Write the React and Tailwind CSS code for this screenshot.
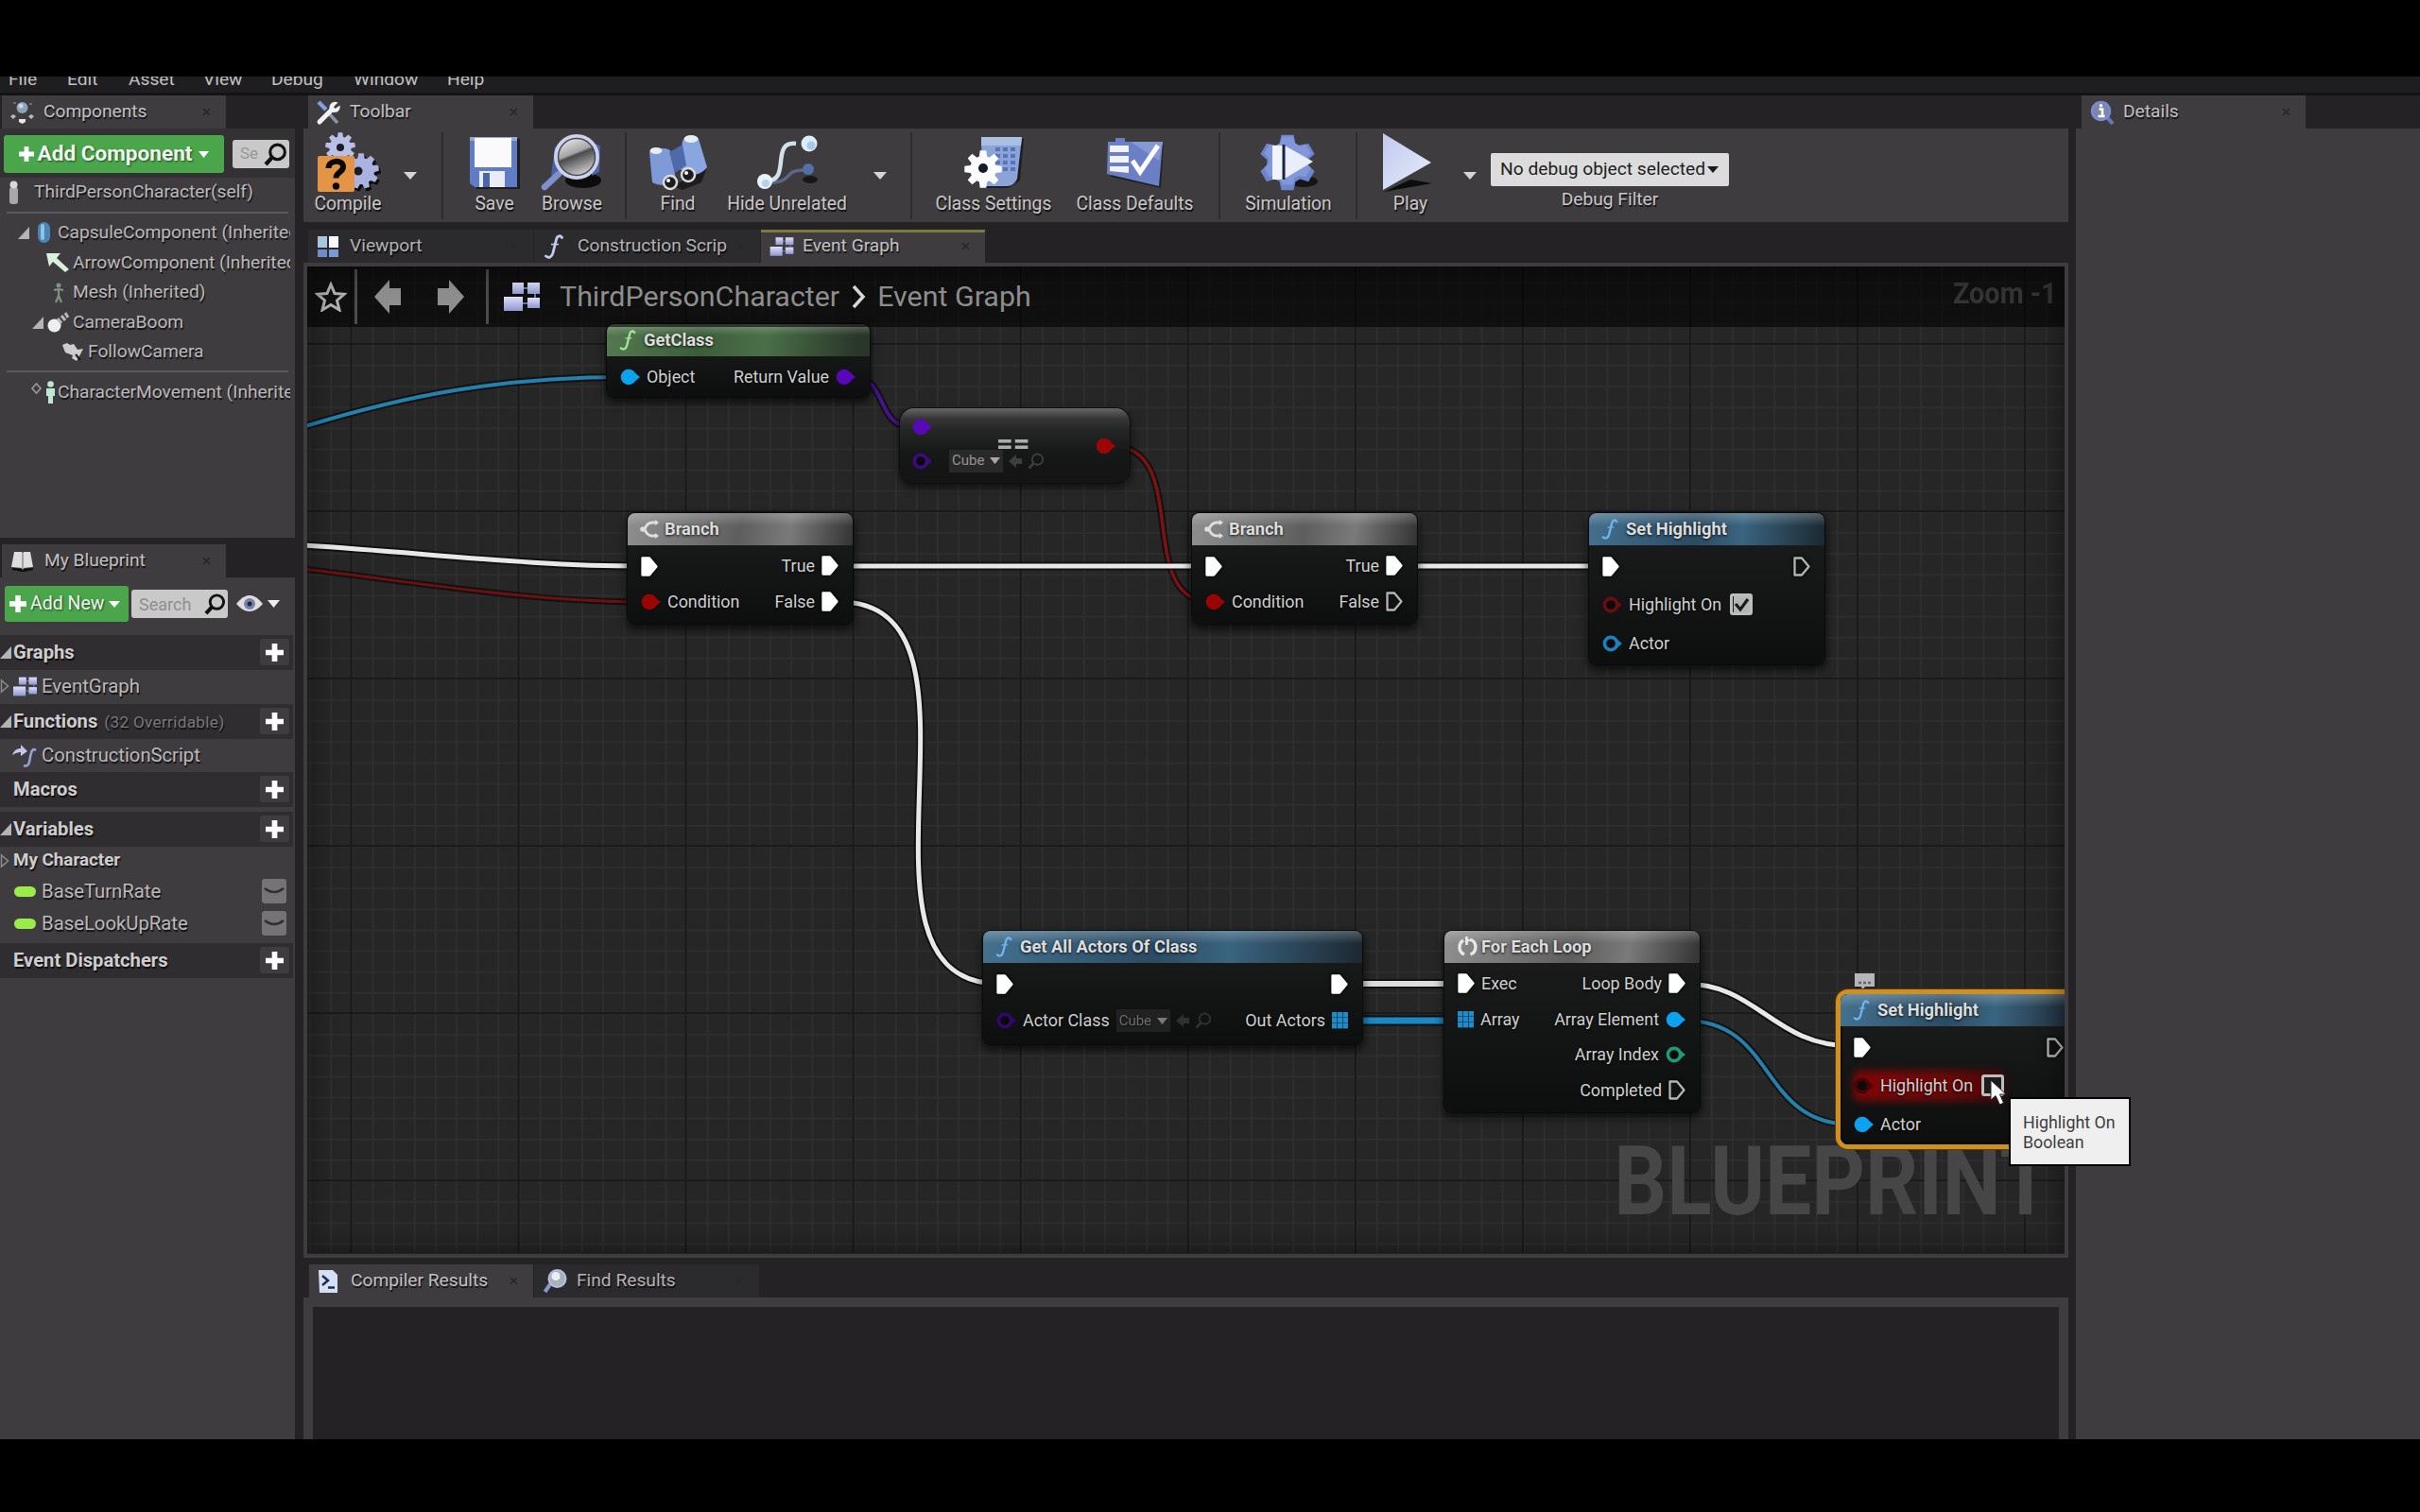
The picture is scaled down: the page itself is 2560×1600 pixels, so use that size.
import React from "react";

const GX = 325;
const GY = 282;

/* ---------- small icons ---------- */
function Svg({ w, h, children, className = "" }) {
  return (
    <svg width={w} height={h} viewBox={`0 0 ${w} ${h}`} className={`shrink-0 overflow-visible ${className}`}>
      {children}
    </svg>
  );
}

const Caret = ({ w = 14, h = 8, c = "#d4d4d4" }) => (
  <Svg w={w} h={h}>
    <path d={`M0 0H${w}L${w / 2} ${h}Z`} fill={c} />
  </Svg>
);

const Expanded = () => (
  <Svg w={12} h={13}>
    <path d="M12 0V13H0Z" fill="#b4b4b4" />
  </Svg>
);

const Collapsed = () => (
  <Svg w={10} h={14}>
    <path d="M1.500 1V13L8.500 7Z" fill="none" stroke="#8a8a8a" strokeWidth="1.500" />
  </Svg>
);

const Close = () => (
  <Svg w={9} h={9}>
    <path d="M1 1L8 8M8 1L1 8" stroke="#272628" strokeWidth="1.600" />
  </Svg>
);

const PlusBold = ({ s = 18, c = "#fff" }) => (
  <Svg w={s} h={s}>
    <path d={`M${s / 2} 0V${s}M0 ${s / 2}H${s}`} stroke={c} strokeWidth={s * 0.3} />
  </Svg>
);

const Search = ({ s = 24, c = "#111", sw = 3 }) => (
  <svg width={s} height={s} viewBox="0 0 24 24" className="shrink-0">
    <circle cx="14" cy="9.500" r="7.500" fill="none" stroke={c} strokeWidth={sw} />
    <path d="M8.500 15L2 22" stroke={c} strokeWidth={sw + 1.2} />
  </svg>
);

const GraphIcon = ({ w = 26, h = 24 }) => (
  <svg width={w} height={h} viewBox="0 0 40 32" className="shrink-0">
    <defs>
      <linearGradient id="gi" x1="0" y1="0" x2="0" y2="1">
        <stop offset="0" stopColor="#dfe0f8" />
        <stop offset="1" stopColor="#8f97cf" />
      </linearGradient>
    </defs>
    <path d="M16 7H34V23H12" fill="none" stroke="#6a6f9c" strokeWidth="2" />
    <rect x="10" y="1" width="12" height="12" fill="url(#gi)" />
    <rect x="26" y="1" width="13" height="12" fill="url(#gi)" />
    <rect x="1" y="16" width="20" height="15" fill="url(#gi)" />
    <rect x="26" y="17" width="13" height="11" fill="url(#gi)" />
  </svg>
);

const FnIcon = ({ c = "#c3c9ee", h = 26, w = 20 }) => (
  <svg width={w} height={h} viewBox="0 0 20 26" className="shrink-0 overflow-visible">
    <path d="M18.500 3.500C17 .8 13.600 1.200 12.600 5L9 19.500C8 24 4.500 25.600 1.500 23" fill="none" stroke={c} strokeWidth="2.800" strokeLinecap="round" />
    <path d="M7 10.500H15" stroke={c} strokeWidth="1.600" />
  </svg>
);

const ComponentsIcon = () => (
  <Svg w={25} h={25}>
    <circle cx="12.500" cy="8" r="6" fill="#8ea3b5" />
    <circle cx="11" cy="6" r="2.500" fill="#c9d8e4" />
    <path d="M0 17l3-2 3 2-3 3zM19 17l3-2 3 2-3 3z" fill="#b9bcc0" />
    <path d="M9 20h7v3l-3.500 2L9 23z" fill="#e8e8e8" />
    <path d="M3 3h3M20 4h3" stroke="#68727c" strokeWidth="2" />
  </Svg>
);

const ToolsIcon = () => (
  <Svg w={26} h={26}>
    <path d="M2 2L10 10" stroke="#7ea2e0" strokeWidth="4.500" />
    <path d="M12 13L22 24" stroke="#8b93a6" strokeWidth="3.500" />
    <path d="M3 23L16 10" stroke="#f2f2f2" strokeWidth="5" strokeLinecap="round" />
    <path d="M22.500 2.500L18 7l1.500 2 5-3.500c1 4-2 8-6.500 7.500-4-.5-6-5-3.500-8.500C16.500 1.500 19.500 1 22.500 2.500z" fill="#f2f2f2" />
  </Svg>
);

const ViewportIcon = () => (
  <Svg w={24} h={24}>
    <rect x="1" y="1" width="10" height="12" fill="#a9c6de" />
    <rect x="13" y="1" width="10" height="12" fill="#f6fafc" />
    <rect x="1" y="15" width="10" height="8" fill="#6f8cc9" />
    <rect x="13" y="15" width="10" height="8" fill="#7d98d6" />
  </Svg>
);

const BookIcon = () => (
  <Svg w={24} h={22}>
    <path d="M3 1h8l1 2 1-2h7l3 16-10 1-1 2-1-2-11-1z" fill="#dedede" />
    <path d="M12 3v15" stroke="#8d8d8d" strokeWidth="1.500" />
    <path d="M1 18l10 1 1 2 1-2 10-1v2l-10 2H11L1 20z" fill="#0d0d0d" />
  </Svg>
);

const DetailsIcon = () => (
  <Svg w={26} h={26}>
    <path d="M17 17L24 25" stroke="#6a78b8" strokeWidth="4" />
    <circle cx="11.500" cy="11.500" r="9.500" fill="#7d86a8" stroke="#7a8ad0" strokeWidth="2.500" />
    <path d="M9.500 9.500h3.500v7M8.500 17h7" stroke="#fff" strokeWidth="2.600" fill="none" />
    <circle cx="11.500" cy="5.800" r="1.700" fill="#fff" />
  </Svg>
);

const LogIcon = () => (
  <Svg w={22} h={26}>
    <path d="M1 1h15l5 5v19H2z" fill="#d5e0f6" />
    <path d="M5 7l6 5-6 5" fill="none" stroke="#1d2c55" strokeWidth="2.500" />
    <path d="M11 19.500h7" stroke="#1d2c55" strokeWidth="2.500" />
  </Svg>
);

const FindIcon = () => (
  <Svg w={25} h={26}>
    <path d="M7 16L1.500 24" stroke="#8c96cf" strokeWidth="4" />
    <circle cx="14.500" cy="10" r="9" fill="#aab0b8" stroke="#b9c0e0" strokeWidth="2" />
    <circle cx="13" cy="7.500" r="4.500" fill="#eceff2" />
  </Svg>
);

/* ---------- toolbar icons ---------- */
function gear(cx, cy, r, n, tooth) {
  const pts = [];
  for (let i = 0; i < n; i++) {
    const a = (i / n) * Math.PI * 2 - Math.PI / 2;
    const s = Math.PI / n;
    [[-0.75, r], [-0.42, r + tooth], [0.42, r + tooth], [0.75, r]].forEach(([k, q]) =>
      pts.push(`${(cx + Math.cos(a + k * s) * q).toFixed(1)},${(cy + Math.sin(a + k * s) * q).toFixed(1)}`)
    );
  }
  return pts.join(" ");
}

const CompileIcon = () => (
  <Svg w={66} h={64}>
    <polygon points={gear(47, 42, 14, 9, 5)} fill="#0c0c0c" transform="translate(2 2)" />
    <polygon points={gear(47, 41, 14, 9, 5)} fill="#a9b2e0" />
    <polygon points={gear(25, 16, 11.5, 9, 4.5)} fill="#b9c0e8" />
    <circle cx="25" cy="16" r="4" fill="#1c1c22" />
    <circle cx="44" cy="41" r="4.500" fill="#1c1c22" />
    <rect x="1" y="25" width="39" height="38" rx="2" fill="#e39545" />
    <path d="M12.500 38c0-9 15.500-9.500 15.500-1.500 0 6-7.500 5.500-7.500 12" fill="none" stroke="#0a0a0a" strokeWidth="6" />
    <circle cx="20.500" cy="57" r="3.700" fill="#0a0a0a" />
  </Svg>
);

const SaveIcon = () => (
  <Svg w={54} h={56}>
    <path d="M4 3h50v53H8z" fill="#111" opacity=".7" />
    <path d="M1 1h50v53H6l-5-4z" fill="#5f7cc4" />
    <path d="M1 1h50v4H1z" fill="#93a9dc" />
    <rect x="6" y="2" width="39" height="31" fill="#fafafc" />
    <rect x="11" y="37" width="27" height="17" fill="#e9ecf4" />
    <rect x="15" y="39" width="7" height="15" fill="#4767ad" />
  </Svg>
);

const BrowseIcon = () => (
  <Svg w={64} h={60}>
    <defs>
      <linearGradient id="lens" x1="0" y1="0" x2=".4" y2="1">
        <stop offset="0" stopColor="#fff" />
        <stop offset=".5" stopColor="#a5a5a7" />
        <stop offset=".56" stopColor="#4a4a4c" />
        <stop offset="1" stopColor="#c9c9c9" />
      </linearGradient>
    </defs>
    <ellipse cx="44" cy="49" rx="19" ry="8" fill="#0c0c0d" />
    <path d="M14 12L10 44l16-4zM56 10l6 2-1 28-8 4z" fill="#4c62a5" />
    <path d="M18 42L3 56" stroke="#7f90d0" strokeWidth="6.500" strokeLinecap="round" />
    <circle cx="37" cy="24" r="22" fill="url(#lens)" stroke="#ccd1ec" strokeWidth="4" />
    <circle cx="37" cy="24" r="19.500" fill="none" stroke="#4b4b55" strokeWidth="1.500" />
  </Svg>
);

const BinocularsIcon = () => (
  <Svg w={62} h={58}>
    <path d="M14 50l12 4 36-20-6 16-20 8z" fill="#131315" opacity=".75" />
    <path d="M1 18c4-4 14-6 22-2l6 30c-8 8-18 8-25 4z" fill="#7e9bd8" />
    <path d="M36 6c4-6 12-6 17-2l9 30c-4 6-12 8-18 9l-12-8z" fill="#8aa6e0" />
    <path d="M22 18l14-8 4 22-12 8z" fill="#4f69ab" />
    <ellipse cx="8" cy="16.500" rx="6.500" ry="3.500" fill="#e8edf5" />
    <ellipse cx="45" cy="4" rx="7.500" ry="4" fill="#e8edf5" />
    <circle cx="23" cy="50" r="7" fill="#1b1b20" stroke="#dadada" strokeWidth="2.500" />
    <circle cx="42" cy="42" r="7" fill="#1b1b20" stroke="#dadada" strokeWidth="2.500" />
    <circle cx="21" cy="48" r="2" fill="#fff" />
    <circle cx="40" cy="40" r="2" fill="#fff" />
  </Svg>
);

const HideIcon = () => (
  <Svg w={66} h={58}>
    <ellipse cx="57" cy="47" rx="8" ry="4" fill="#18181a" />
    <path d="M14 50C40 50 28 37 50 37" fill="none" stroke="#5a6786" strokeWidth="3.500" />
    <circle cx="55" cy="36" r="6" fill="#5470a8" />
    <path d="M10 48C38 50 14 6 42 9" fill="none" stroke="#cfe2ea" strokeWidth="4.500" />
    <circle cx="9" cy="49" r="8" fill="#e8f3fb" />
    <circle cx="10" cy="51" r="4" fill="#b5d2ea" />
    <circle cx="56" cy="9" r="8.500" fill="#dcedf9" />
    <circle cx="58" cy="11" r="4.500" fill="#a9c9e8" />
  </Svg>
);

const ClassSettingsIcon = () => (
  <Svg w={64} h={58}>
    <path d="M22 4h42l-4 44-12 8H24z" fill="#131315" opacity=".7" />
    <path d="M19 2h43l-5 44c-2 5-6 8-11 8H20z" fill="#8ba3d8" />
    <path d="M19 2h43l-1 9H19z" fill="#a9bfe4" />
    <g fill="#5b74b8">
      {[0, 1, 2, 3].map((r) => [0, 1, 2].map((c) => <rect key={`${r}-${c}`} x={34 + c * 8} y={13 + r * 7} width="5" height="4" />))}
    </g>
    <polygon points={gear(21, 36, 14, 8, 6)} fill="#fdfdfd" />
    <circle cx="21" cy="35" r="5" fill="#15192c" />
  </Svg>
);

const ClassDefaultsIcon = () => (
  <Svg w={62} h={54}>
    <path d="M4 42l54 12 3-46z" fill="#131315" opacity=".6" />
    <path d="M2 5h8V1h10v4h40l-4 47L1 39z" fill="#6b7fc4" />
    <path d="M26 5h34l-4 20z" fill="#8698d4" />
    <path d="M4 9h20v7H4zM4 20h20v7H4zM4 31h20v7L4 36z" fill="#f2f3f8" />
    <path d="M28 25l8 12L55 9" fill="none" stroke="#fff" strokeWidth="5" />
  </Svg>
);

const SimulationIcon = () => (
  <Svg w={64} h={60}>
    <ellipse cx="48" cy="50" rx="15" ry="6" fill="#151517" />
    <polygon points={gear(31, 30, 22, 6, 8)} fill="#6c84cc" />
    <polygon points={gear(31, 28, 20, 6, 6)} fill="#8297da" />
    <rect x="15" y="12" width="11" height="36" fill="#f2f4fb" />
    <path d="M28 12L58 29L28 47Z" fill="#e8eefb" />
    <path d="M27 11V48" stroke="#1c2344" strokeWidth="3" />
  </Svg>
);

const PlayIcon = () => (
  <Svg w={60} h={62}>
    <defs>
      <linearGradient id="pl" x1="0" y1="0" x2="1" y2="1">
        <stop offset="0" stopColor="#c3c8ee" />
        <stop offset="1" stopColor="#e4effa" />
      </linearGradient>
    </defs>
    <path d="M2 62L53 53L30 49Z" fill="#0c0c0d" />
    <path d="M1 0V60L52 31Z" fill="url(#pl)" />
  </Svg>
);

/* ---------- tabs & panels ---------- */
const shadow = "[text-shadow:1px_2px_1px_rgba(0,0,0,0.75)]";

function Tab({ icon, label, active = true, accent = false, className = "" }) {
  return (
    <div
      className={`flex h-[35px] items-center pr-[16px] ${active ? "bg-[#3e3c3f]" : "bg-[#2b2a2c]"} ${
        accent ? "shadow-[inset_0_3px_0_#7d7b3c]" : ""
      } ${className}`}
    >
      <div className="flex w-[35px] items-center">{icon}</div>
      <div className={`flex-1 overflow-hidden whitespace-nowrap text-[19.200px] ${active ? "text-[#c2c0c3]" : "text-[#b3b1b4]"} ${shadow}`}>{label}</div>
      <Close />
    </div>
  );
}

function TreeRow({ pad, children, label, className = "h-[32px]", iconW }) {
  return (
    <div className={`mr-[5px] flex items-center overflow-hidden whitespace-nowrap text-[19.200px] text-[#bab8bb] ${pad} ${className}`}>
      <div className={`flex shrink-0 items-center justify-start ${iconW}`}>{children}</div>
      <span className={shadow}>{label}</span>
    </div>
  );
}

function Section({ label, note, open, className = "" }) {
  return (
    <div className={`flex h-[37px] w-[310px] items-center bg-[#2f2d30] pr-[4px] pb-[1px] ${className}`}>
      <div className="w-[14px] shrink-0">{open && <Expanded />}</div>
      <div className={`flex-1 whitespace-nowrap text-[20.200px] font-bold text-[#cfcdd0] ${shadow}`}>
        {label}
        {note && <span className="ml-[7px] text-[17.200px] font-normal tracking-[0.300px] text-[#78767a]">{note}</span>}
      </div>
      <div className="flex h-[28px] w-[31px] items-center justify-center rounded-[3px] bg-[#3e3c3f]">
        <PlusBold s={19} />
      </div>
    </div>
  );
}

const Pill = () => <div className="h-[11px] w-[23px] rounded-full bg-[#9bec4b]" />;

function VarRow({ label }) {
  return (
    <div className="flex h-[34px] items-center pr-[9px] pb-[2px] pl-[15px] text-[20.300px] text-[#bab8bb]">
      <div className="w-[29px]">
        <Pill />
      </div>
      <span className={`flex-1 ${shadow}`}>{label}</span>
      <div className="flex h-[26px] w-[26px] items-center justify-center rounded-[3px] bg-[#757376]">
        <Svg w={22} h={8}>
          <path d="M1 1Q11 9 21 1" fill="none" stroke="#2f2e30" strokeWidth="2.400" />
        </Svg>
      </div>
    </div>
  );
}

function Tool({ icon, label, className }) {
  return (
    <div className={`flex flex-col items-center ${className}`}>
      <div className="flex h-[64px] items-center">{icon}</div>
      <div className={`h-[24px] whitespace-nowrap text-[19.300px] leading-[24px] text-[#c8c6c9] ${shadow}`}>{label}</div>
    </div>
  );
}

const ToolSep = ({ className }) => <div className={`h-[92px] w-[2px] bg-[#2c2b2d] ${className}`} />;

/* ---------- graph nodes ---------- */
const Exec = ({ on = true }) => (
  <Svg w={18} h={21} className="drop-shadow-[0_0_2px_#000]">
    <path d="M1.500 1.500H9L16.500 10.500L9 19.500H1.500Z" fill={on ? "#fff" : "#111"} stroke={on ? "#fff" : "#b4b4b4"} strokeWidth="2.300" strokeLinejoin="round" />
  </Svg>
);

const Pin = ({ c, on = true }) => (
  <Svg w={21} h={18}>
    <circle cx="9" cy="9" r={on ? 8.3 : 6.6} fill={on ? c : "#0a0a0a"} stroke={on ? "none" : c} strokeWidth="3.600" />
    <path d="M15.500 4.500L21 9L15.500 13.500Z" fill={c} />
  </Svg>
);

const ArrayPin = () => (
  <Svg w={17} h={18}>
    <rect width="17" height="17.500" fill="#11486a" />
    {[0, 1, 2].map((r) => [0, 1, 2].map((c) => <rect key={`${r}${c}`} x={c * 6} y={r * 6} width="5" height="5.200" fill="#1f8bc8" />))}
  </Svg>
);

const Check = ({ on }) => (
  <div className="ml-[2px] flex h-[23px] w-[24px] items-center justify-center rounded-[3px] border-[3px] border-[#bdbdbd] bg-[#1c1c1c]">
    {on && (
      <Svg w={19} h={19}>
        <rect x="1" y="1" width="17" height="17" fill="#b5b5b5" />
        <path d="M3 9l5 6 8-11" fill="none" stroke="#1b1b1b" strokeWidth="3.200" />
      </Svg>
    )}
  </div>
);

const ClassPicker = ({ dim }) => (
  <div className={`flex items-center gap-[6px] ${dim ? "opacity-60" : "opacity-90"}`}>
    <div className="flex h-[24px] w-[57px] items-center justify-between bg-[#2c2c2c] px-[3px] text-[15px] text-[#a8a8a8]">
      Cube
      <Caret w={11} h={7} c="#c0c0c0" />
    </div>
    <Svg w={14} h={14}>
      <path d="M0 7L8 0V4H14V10H8V14Z" fill="#454545" />
    </Svg>
    <Search s={18} c="#454545" sw={2.4} />
  </div>
);

const LoopIcon = () => (
  <Svg w={23} h={22}>
    <path d="M7 4A8.500 8.500 0 0 0 8 19M14 3A8.500 8.500 0 0 1 14.500 19" fill="none" stroke="#e8e8e8" strokeWidth="3.400" />
    <path d="M10.500 0V9" stroke="#e8e8e8" strokeWidth="2.600" />
    <path d="M9 1l6 3-6 3.500z" fill="#e8e8e8" />
  </Svg>
);

const BranchIcon = () => (
  <Svg w={20} h={20}>
    <path d="M18 3H13C8 3 6 7 5 10C6 13 8 17 13 17H18" fill="none" stroke="#ddd" strokeWidth="2.800" />
    <circle cx="3" cy="10" r="2.800" fill="#ddd" />
    <path d="M16 0l4 3-4 3zM16 14l4 3-4 3z" fill="#ddd" />
  </Svg>
);

const headers = {
  green:
    "bg-[linear-gradient(to_bottom,rgba(255,255,255,0.26),transparent_35%),linear-gradient(95deg,#54794f_0%,#3c5d3a_35%,#4b7048_60%,#2a3629_95%)]",
  gray: "bg-[linear-gradient(to_bottom,rgba(255,255,255,0.22),transparent_40%),linear-gradient(100deg,#8f8f8f_0%,#5e5e5e_50%,#7a7a7a_72%,#333333_100%)]",
  blue: "bg-[linear-gradient(to_bottom,rgba(255,255,255,0.24),transparent_40%),linear-gradient(95deg,#44718f_0%,#2b4b62_45%,#3a6480_65%,#1c2831_100%)]",
};

function Node({ x, y, w, h, kind, icon, title, selected, children }) {
  return (
    <div
      className={`absolute flex flex-col overflow-hidden rounded-[8px] bg-[linear-gradient(to_bottom,#191a1a_20%,#0d0e0e_100%)] ${
        selected ? "shadow-[0_0_0_5px_#cf9022,0_0_0_6px_#5a3b08,inset_0_0_0_2px_#0a0a0a]" : "shadow-[0_0_0_1px_#0a0a0a,0_4px_10px_2px_rgba(0,0,0,0.65)]"
      }`}
      style={{ left: x - GX, top: y - GY, width: w, height: h }}
    >
      <div className={`flex h-[34px] shrink-0 items-center pl-[13px] ${headers[kind]}`}>
        <div className="flex w-[26px] items-center">{icon}</div>
        <span className="text-[18.300px] font-bold whitespace-nowrap text-[#dcdcdc] [text-shadow:0_1px_3px_rgba(0,0,0,0.9)]">{title}</span>
      </div>
      <div className="flex flex-col pt-[3px]">{children}</div>
    </div>
  );
}

function Row({ left, right, className = "h-[38px]" }) {
  return (
    <div className={`flex items-center justify-between pr-[15px] pl-[14px] text-[17.900px] whitespace-nowrap text-[#cfcfcf] [text-shadow:0_1px_3px_#000] ${className}`}>
      <div className="flex items-center gap-[7px]">{left}</div>
      <div className="flex items-center gap-[7px]">{right}</div>
    </div>
  );
}

const Wire = ({ d, c, w }) => (
  <g fill="none">
    <path d={d} stroke="#000" strokeOpacity=".55" strokeWidth={w + 4} />
    <path d={d} stroke={c} strokeWidth={w} />
  </g>
);

const blueF = <FnIcon c="#6fb4ec" h={22} w={18} />;

function Branch({ x, falseOn }) {
  return (
    <Node x={x} y={543} w={238} h={117} kind="gray" icon={<BranchIcon />} title="Branch">
      <Row left={<Exec />} right={<>True<Exec /></>} />
      <Row left={<><Pin c="#9b0404" />Condition</>} right={<>False<Exec on={falseOn} /></>} />
    </Node>
  );
}

function Graph() {
  return (
    <div className="relative h-[1044px] w-[1859px] overflow-hidden bg-[#262626]">
      <svg width="1859" height="1044" viewBox="325 282 1859 1044" className="block">
        <defs>
          <pattern id="minor" x="371.600" y="364" width="22.130" height="22.130" patternUnits="userSpaceOnUse">
            <path d="M0 0H22.130M0 0V22.130" stroke="#303030" strokeWidth="3" />
          </pattern>
          <pattern id="major" x="370.600" y="363" width="177.060" height="177.060" patternUnits="userSpaceOnUse">
            <path d="M1 0V177.060M0 1H177.060" stroke="#191919" strokeWidth="2" />
          </pattern>
        </defs>
        <rect x="325" y="282" width="1859" height="1044" fill="url(#minor)" />
        <rect x="325" y="282" width="1859" height="1044" fill="url(#major)" />
      </svg>

      <div className="absolute right-[14px] bottom-[21px] origin-right scale-x-[0.860] text-[102px] leading-[110px] font-bold text-[#464647]">BLUEPRINT</div>

      <svg width="1859" height="1044" viewBox="325 282 1859 1044" className="absolute inset-0">
        <Wire d="M320 452C430 418 530 399 662 399" c="#2580ab" w={4} />
        <Wire d="M320 577C450 585 560 599 680 599" c="#e8e8e8" w={5} />
        <Wire d="M320 602C440 616 560 637 680 637" c="#6d1010" w={3} />
        <Wire d="M902 399C940 399 925 452 966 452" c="#45128a" w={4} />
        <Wire d="M1176 472C1262 472 1198 637 1282 637" c="#7a1414" w={3.5} />
        <Wire d="M888 599H1280" c="#e8e8e8" w={5} />
        <Wire d="M1480 599H1700" c="#e8e8e8" w={5} />
        <Wire d="M888 637C1070 637 875 1041 1057 1041" c="#e8e8e8" w={5} />
        <Wire d="M1425 1041H1541" c="#dddddd" w={6} />
        <Wire d="M1425 1080H1541" c="#1d87c2" w={7} />
        <Wire d="M1782 1041C1860 1041 1875 1107 1960 1107" c="#e8e8e8" w={5} />
        <Wire d="M1782 1080C1880 1080 1860 1190 1960 1190" c="#2580ab" w={4} />
      </svg>

      <Node x={642} y={343} w={278} h={77} kind="green" icon={<FnIcon c="#a5e39a" h={22} w={18} />} title="GetClass">
        <Row left={<><Pin c="#0ba2f0" />Object</>} right={<>Return Value<Pin c="#5806b8" /></>} />
      </Node>

      <div
        className="absolute flex items-center justify-between rounded-[15px] bg-[linear-gradient(to_bottom,#6a6a6a_0%,#363636_14%,#242626_30%,#161817_60%,#121413_100%)] pr-[15px] pl-[13px] opacity-95 shadow-[0_0_0_1px_#0d0d0d,0_4px_8px_2px_rgba(0,0,0,0.55)]"
        style={{ left: 952 - GX, top: 432 - GY, width: 243, height: 79 }}
      >
        <div className="flex flex-col gap-[15px] pb-[1px]">
          <Pin c="#5a08c0" />
          <div className="flex h-[24px] items-center gap-[18px]">
            <Pin c="#3e0a86" on={false} />
            <ClassPicker />
          </div>
        </div>
        <Pin c="#a50505" />
        <div className="absolute top-[20px] left-[102px] text-[31px] leading-[36px] font-bold text-[#b5b5b5]">==</div>
      </div>

      <Branch x={664} falseOn />
      <Branch x={1261} falseOn={false} />

      <Node x={1681} y={543} w={249} h={160} kind="blue" icon={blueF} title="Set Highlight">
        <Row left={<Exec />} right={<Exec on={false} />} />
        <Row className="h-[44px]" left={<><Pin c="#6b0b12" on={false} />Highlight On<Check on /></>} />
        <Row left={<><Pin c="#1c82bd" on={false} />Actor</>} />
      </Node>

      <Node x={1040} y={985} w={401} h={120} kind="blue" icon={blueF} title="Get All Actors Of Class">
        <Row left={<Exec />} right={<Exec />} />
        <Row
          className="h-[41px]"
          left={<><Pin c="#32076c" on={false} />Actor Class<ClassPicker dim /></>}
          right={<>Out Actors<ArrayPin /></>}
        />
      </Node>

      <Node x={1528} y={985} w={270} h={192} kind="gray" icon={<LoopIcon />} title="For Each Loop">
        <Row left={<><Exec />Exec</>} right={<>Loop Body<Exec /></>} />
        <Row left={<><ArrayPin />Array</>} right={<>Array Element<Pin c="#0ba2f0" /></>} />
        <Row className="h-[37px]" right={<>Array Index<Pin c="#1f9a78" on={false} /></>} />
        <Row right={<>Completed<Exec on={false} /></>} />
      </Node>

      <Svg w={24} h={18} className="absolute top-[748px] left-[1636px]">
        <path d="M1 0H22V14H12L9 18L8 14H1Z" fill="#b5b5bb" />
        <path d="M5 10H19" stroke="#66666c" strokeWidth="2.500" strokeDasharray="3 2" />
      </Svg>
      <Node x={1947} y={1052} w={251} h={159} kind="blue" icon={blueF} title="Set Highlight" selected>
        <Row left={<Exec />} right={<Exec on={false} />} />
        <Row
          className="relative h-[44px]"
          left={
            <>
              <div className="absolute top-[6px] left-[14px] h-[32px] w-[158px] rounded-[5px] bg-[linear-gradient(to_right,#800606,#6e0808_60%,#4a0505)] blur-[4px]" />
              <span className="relative flex items-center gap-[7px]">
                <Pin c="#4a0404" on={false} />Highlight On<Check />
              </span>
            </>
          }
        />
        <Row left={<><Pin c="#0ba2f0" />Actor</>} />
      </Node>

      <div className="absolute inset-x-0 top-0 flex h-[64px] items-center bg-black/60 text-[30.400px] text-[#8e8e8e]">
        <div className="flex w-[50px] justify-center">
          <svg width="34" height="32" viewBox="0 0 34 32">
            <path d="M17 3L21 12.500L31 13.300L23.500 20L26 30L17 24.500L8 30L10.500 20L3 13.300L13 12.500Z" fill="none" stroke="#b0b0b0" strokeWidth="3" />
          </svg>
        </div>
        <div className="h-[58px] w-[3px] bg-[#4c4c4c]" />
        <div className="flex w-[136px] items-center justify-between pr-[23px] pl-[18px]">
          <Svg w={28} h={36}>
            <path d="M0 18L16 0V9H28V27H16V36Z" fill="#8e8e8e" />
          </Svg>
          <Svg w={28} h={36}>
            <path d="M28 18L12 0V9H0V27H12V36Z" fill="#8e8e8e" />
          </Svg>
        </div>
        <div className="h-[58px] w-[3px] bg-[#4c4c4c]" />
        <div className="ml-[15px] flex w-[60px]">
          <GraphIcon w={40} h={32} />
        </div>
        <span>ThirdPersonCharacter</span>
        <Svg w={14} h={24} className="mx-[13px]">
          <path d="M2 1L12 12L2 23" fill="none" stroke="#d8d8d8" strokeWidth="3.500" />
        </Svg>
        <span>Event Graph</span>
        <div className="ml-auto origin-right scale-x-[0.930] pr-[9px] pb-[5px] text-[31px] font-bold text-[#343434]">Zoom -1</div>
      </div>
      <div className="pointer-events-none absolute inset-0 shadow-[inset_0_0_24px_6px_rgba(0,0,0,0.35)]" />
    </div>
  );
}

/* ---------- page ---------- */
function LeftColumn() {
  return (
    <div className="flex w-[312px] flex-col">
      <Tab className="ml-[2px] w-[237px] pl-[9px]" icon={<ComponentsIcon />} label="Components" />
      <div className="flex h-[433px] flex-col bg-[#3e3c3f]">
        <div className="flex h-[52px] items-center gap-[9px] bg-[#333134] pt-[2px] pl-[4px]">
          <div className="flex h-[40px] w-[233px] items-center justify-center gap-[4px] rounded-[3px] bg-[#4aa54b] text-[22.600px] font-bold text-[#eef5ee] [text-shadow:1px_1px_2px_rgba(0,0,0,0.6)]">
            <PlusBold s={16} />
            <span className="whitespace-nowrap">Add Component</span>
            <span className="ml-[3px]">
              <Caret w={11} h={7} c="#fff" />
            </span>
          </div>
          <div className="flex h-[30px] w-[60px] items-center justify-between rounded-[3px] bg-[#c9c9c9] pr-[2px] pl-[8px] text-[17px] text-[#979797]">
            Se
            <Search s={25} />
          </div>
        </div>
        <TreeRow pad="pl-[9px]" iconW="w-[27px]" label="ThirdPersonCharacter(self)" className="h-[31px]">
          <Svg w={11} h={25}>
            <rect x="1" y="7" width="9" height="18" rx="3" fill="#a8a8a8" />
            <circle cx="5.500" cy="4.500" r="4" fill="#d8d8d8" />
          </Svg>
        </TreeRow>
        <div className="mx-[7px] mt-[5px] mb-[4px] h-[2px] bg-[#5a595b]" />
        <TreeRow pad="pl-[19px]" iconW="w-[42px] gap-[9px]" label="CapsuleComponent (Inherited)">
          <Expanded />
          <Svg w={14} h={22}>
            <rect x="0" y="0" width="13" height="22" rx="6.500" fill="#4a86b4" />
            <rect x="3" y="2" width="4" height="17" rx="2" fill="#8ec3e6" />
          </Svg>
        </TreeRow>
        <TreeRow pad="pl-[48px]" iconW="w-[29px]" label="ArrowComponent (Inherited)">
          <Svg w={26} h={20}>
            <path d="M1 0H16L12 5L25 17L21 20L8 9L4 14Z" fill="#d8f0dc" />
          </Svg>
        </TreeRow>
        <TreeRow pad="pl-[56px]" iconW="w-[21px]" label="Mesh (Inherited)" className="h-[31px]">
          <Svg w={12} h={22}>
            <circle cx="6" cy="3" r="2.500" fill="#7f9482" />
            <path d="M1 8L6 7L11 8M6 7V14L3 21M6 14L9 21" stroke="#7f9482" strokeWidth="2.200" fill="none" />
          </Svg>
        </TreeRow>
        <TreeRow pad="pl-[34px]" iconW="w-[43px] gap-[4px]" label="CameraBoom">
          <Expanded />
          <Svg w={24} h={22}>
            <circle cx="7.500" cy="14.500" r="7" fill="#eee" />
            <path d="M11 7L15 12M15 4L19 9M19 1L22 6" stroke="#b8b8b8" strokeWidth="3" />
          </Svg>
        </TreeRow>
        <TreeRow pad="pl-[65px]" iconW="w-[28px]" label="FollowCamera" className="h-[31px]">
          <Svg w={24} h={21}>
            <path d="M1 3L6 1L9 3L13 2L17 8L23 7L20 13L16 20L11 17L12 14L4 11Z" fill="#cdcdcd" />
            <path d="M15 13L20 19" stroke="#1a1a1a" strokeWidth="2" />
          </Svg>
        </TreeRow>
        <div className="mx-[7px] mt-[4px] mb-[5px] h-[2px] bg-[#5a595b]" />
        <TreeRow pad="pl-[33px]" iconW="w-[28px] gap-[4px]" label="CharacterMovement (Inherited)">
          <Svg w={11} h={20}>
            <path d="M5.500 1L10 6L5.500 11L1 6Z" fill="none" stroke="#9a9a9a" strokeWidth="1.600" />
          </Svg>
          <Svg w={11} h={24}>
            <circle cx="5.500" cy="3.500" r="3.300" fill="#bfe6d2" />
            <path d="M1 8H10V16H8V24H3V16H1Z" fill="#bfe6d2" />
          </Svg>
        </TreeRow>
      </div>

      <Tab className="mt-[7px] ml-[2px] w-[237px] pl-[10px]" icon={<BookIcon />} label="My Blueprint" />
      <div className="flex flex-1 flex-col bg-[#3e3c3f] pt-[9px]">
        <div className="flex h-[38px] items-center pl-[5px]">
          <div className="flex h-[38px] w-[131px] items-center gap-[4px] rounded-[3px] bg-[#4aa54b] pl-[5px] text-[19.500px] text-[#eef5ee] [text-shadow:1px_1px_2px_rgba(0,0,0,0.6)]">
            <PlusBold s={18} />
            <span className="whitespace-nowrap">Add New</span>
            <span className="ml-auto pr-[9px]">
              <Caret w={12} h={7} c="#fff" />
            </span>
          </div>
          <div className="ml-[3px] flex h-[30px] w-[102px] items-center justify-between rounded-[3px] bg-[#c9c9c9] pr-[2px] pl-[8px] text-[18px] text-[#8f8f8f]">
            Search
            <Search s={23} />
          </div>
          <Svg w={28} h={18} className="mr-[5px] ml-[9px]">
            <path d="M0 9Q14-9 28 9Q14 25 0 9Z" fill="#dddde2" />
            <circle cx="14" cy="9" r="6" fill="#7a82ab" />
            <circle cx="14" cy="9" r="2.500" fill="#22253a" />
          </Svg>
          <Caret w={13} h={8} c="#eee" />
        </div>
        <Section className="mt-[14px]" label="Graphs" open />
        <div className="flex h-[36px] items-center pb-[2px] text-[20.400px] text-[#bab8bb]">
          <div className="w-[13px]">
            <Collapsed />
          </div>
          <div className="w-[31px]">
            <GraphIcon w={27} h={21} />
          </div>
          <span className={shadow}>EventGraph</span>
        </div>
        <Section label="Functions" note="(32 Overridable)" open />
        <div className="flex h-[35px] items-center pl-[13px] text-[20.200px] text-[#bab8bb]">
          <div className="w-[31px]">
            <Svg w={27} h={24}>
              <path d="M0 11C2 5 6 4 9 4V0L16 7L9 12V8C6 8 3 9 0 11Z" fill="#c3c6e6" />
              <path d="M25 6C21 3 20 8 19 13C18 20 17 24 12 22" fill="none" stroke="#979fd4" strokeWidth="2.600" />
            </Svg>
          </div>
          <span className={shadow}>ConstructionScript</span>
        </div>
        <Section label="Macros" />
        <Section className="mt-[5px]" label="Variables" open />
        <div className="flex h-[31px] items-center pb-[2px] text-[18.800px] font-bold text-[#cfcdd0]">
          <div className="w-[14px]">
            <Collapsed />
          </div>
          <span className={shadow}>My Character</span>
        </div>
        <VarRow label="BaseTurnRate" />
        <VarRow label="BaseLookUpRate" />
        <Section className="mt-[3px]" label="Event Dispatchers" />
      </div>
    </div>
  );
}

function CenterColumn() {
  return (
    <div className="flex w-[1867px] flex-col">
      <Tab className="ml-[5px] w-[238px] pl-[9px]" icon={<ToolsIcon />} label="Toolbar" />
      <div className="flex h-[99px] items-start bg-[#3e3c3f] pt-[4px]">
        <Tool className="w-[94px]" icon={<CompileIcon />} label="Compile" />
        <div className="flex h-[92px] w-[38px] items-center justify-center">
          <Caret />
        </div>
        <ToolSep className="mr-[13px] ml-[14px]" />
        <Tool className="w-[82px]" icon={<SaveIcon />} label="Save" />
        <Tool className="w-[82px]" icon={<BrowseIcon />} label="Browse" />
        <ToolSep className="mr-[14px] ml-[15px]" />
        <Tool className="w-[80px]" icon={<BinocularsIcon />} label="Find" />
        <Tool className="w-[151px]" icon={<HideIcon />} label="Hide Unrelated" />
        <div className="flex h-[92px] w-[46px] items-center justify-center">
          <Caret />
        </div>
        <ToolSep className="mr-[11px] ml-[9px]" />
        <Tool className="w-[150px]" icon={<ClassSettingsIcon />} label="Class Settings" />
        <Tool className="w-[149px]" icon={<ClassDefaultsIcon />} label="Class Defaults" />
        <ToolSep className="mr-[12px] ml-[14px]" />
        <Tool className="w-[120px]" icon={<SimulationIcon />} label="Simulation" />
        <ToolSep className="mr-[19px] ml-[11px]" />
        <Tool className="w-[74px]" icon={<PlayIcon />} label="Play" />
        <div className="flex h-[92px] w-[48px] items-center justify-end pr-[15px]">
          <Caret />
        </div>
        <div className="flex w-[252px] flex-col items-center pt-[22px]">
          <div className="flex h-[35px] w-full items-center justify-between rounded-[2px] bg-[#dcdcdc] pr-[11px] pl-[10px] text-[19.200px] text-[#1e1e1e]">
            <span className="whitespace-nowrap">No debug object selected</span>
            <Caret w={12} h={7} c="#1a1a1a" />
          </div>
          <div className={`mt-[2px] text-[19.200px] leading-[24px] text-[#c8c6c9] ${shadow}`}>Debug Filter</div>
        </div>
      </div>
      <div className="mt-[8px] flex h-[35px] items-end gap-[1px] pl-[5px]">
        <Tab active={false} className="w-[238px] pl-[9px]" icon={<ViewportIcon />} label="Viewport" />
        <Tab active={false} className="w-[239px] pl-[11px]" icon={<FnIcon />} label="Construction Scrip" />
        <Tab accent className="w-[237px] pl-[9px]" icon={<GraphIcon />} label="Event Graph" />
      </div>
      <div className="h-[1053px] border-4 border-[#3e3c3f]">
        <Graph />
      </div>
      <div className="mt-[7px] flex h-[35px] gap-[1px] pl-[6px]">
        <Tab className="w-[237px] pl-[9px]" icon={<LogIcon />} label="Compiler Results" />
        <Tab active={false} className="w-[238px] pl-[10px]" icon={<FindIcon />} label="Find Results" />
      </div>
      <div className="flex-1 border-x-[10px] border-t-[10px] border-[#3e3c3f] bg-[#242225]" />
    </div>
  );
}

const menu = [
  ["File", "w-[62px]"],
  ["Edit", "w-[65px]"],
  ["Asset", "w-[79px]"],
  ["View", "w-[72px]"],
  ["Debug", "w-[87px]"],
  ["Window", "w-[99px]"],
  ["Help", "w-[60px]"],
];

export default function App() {
  return (
    <div className="relative flex h-[1600px] w-[2560px] flex-col overflow-hidden bg-black py-[81px] pb-[77px] font-['Roboto',sans-serif]">
      <div className="flex h-[17px] items-end overflow-hidden bg-[#1e1d1f] pb-[2px] pl-[9px]">
        {menu.map(([m, w]) => (
          <div key={m} className={`shrink-0 text-[19.200px] leading-[24px] text-[#c0c0c0] ${w}`}>
            {m}
          </div>
        ))}
      </div>
      <div className="h-[3px] shrink-0 bg-[#131313]" />
      <div className="flex min-h-0 flex-1 bg-[#242225]">
        <LeftColumn />
        <div className="w-[9px]" />
        <CenterColumn />
        <div className="ml-[8px] flex flex-1 flex-col">
          <Tab className="ml-[6px] w-[237px] pl-[9px]" icon={<DetailsIcon />} label="Details" />
          <div className="flex-1 bg-[#3e3c3f]" />
        </div>
      </div>

      <div className="absolute top-[1161px] left-[2125px] flex h-[73px] w-[129px] flex-col justify-center border-2 border-black bg-[#efefef] pl-[13px] text-[17.800px] leading-[21px] whitespace-nowrap text-[#3e3e3e]">
        <div>Highlight On</div>
        <div>Boolean</div>
      </div>
      <Svg w={18} h={28} className="absolute top-[1142px] left-[2105px]">
        <path d="M1 1V22L6 17.500L10.500 27L14.500 25L10.500 16H17Z" fill="#fff" stroke="#222" strokeWidth="1" />
      </Svg>
    </div>
  );
}
